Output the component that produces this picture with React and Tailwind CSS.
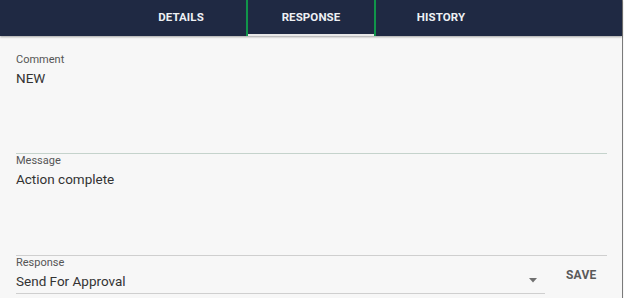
import React from "react";

export default function App() {
  const font = { fontFamily: "Roboto, 'Liberation Sans', sans-serif" };
  return (
    <div className="w-[624px] h-[298px] bg-[#f7f7f7] overflow-hidden flex" style={font}>
      <div className="w-[623px] h-full flex flex-col border-r border-[#7a7a7a]">
        <div className="w-[622px] h-[36px] bg-[#1f2943] flex justify-center shadow-[0_1px_2px_rgba(0,0,0,0.35)] relative z-10">
          <div className="w-[130px] h-full flex items-center justify-center text-[11.5px] font-bold text-[#eef0f4] tracking-[0.1px]">DETAILS</div>
          <div className="w-[130px] h-full flex items-center justify-center text-[11.5px] font-bold text-[#eef0f4] border-x-2 border-[#10944a] relative tracking-[0.1px]">
            RESPONSE
            <div className="absolute left-0 right-0 bottom-0 h-[2px] bg-[#e8e8e8]"></div>
          </div>
          <div className="w-[130px] h-full flex items-center justify-center text-[11.5px] font-bold text-[#eef0f4] tracking-[0.1px]">HISTORY</div>
        </div>
        <div className="pl-4 pr-[15px] pt-[17px] flex flex-col">
          <div className="h-[101px] border-b border-[#c5d3cc] flex flex-col">
            <div className="text-[11px] leading-[13px] text-[#555]">Comment</div>
            <div className="mt-[2px] text-[13.5px] leading-[20px] text-[#333]">NEW</div>
          </div>
          <div className="h-[102px] border-b border-[#cfcfcf] flex flex-col">
            <div className="text-[11px] leading-[13px] text-[#555]">Message</div>
            <div className="mt-[2px] text-[13.5px] leading-[20px] text-[#333]">Action complete</div>
          </div>
          <div className="flex items-start">
            <div className="w-[529px] h-[38px] border-b border-[#cfcfcf] flex flex-col relative">
              <div className="text-[11px] leading-[13px] text-[#555]">Response</div>
              <div className="mt-[2px] text-[13.5px] leading-[20px] text-[#333]">Send For Approval</div>
              <svg className="absolute right-[8px] top-[22px]" width="8" height="5" viewBox="0 0 8 5">
                <path d="M0 0 L8 0 L4 4.5 Z" fill="#707070" />
              </svg>
            </div>
            <div className="ml-[21px] mt-[10px] text-[12px] font-bold text-[#5a5a5a] tracking-[0.2px]">SAVE</div>
          </div>
        </div>
      </div>
    </div>
  );
}
